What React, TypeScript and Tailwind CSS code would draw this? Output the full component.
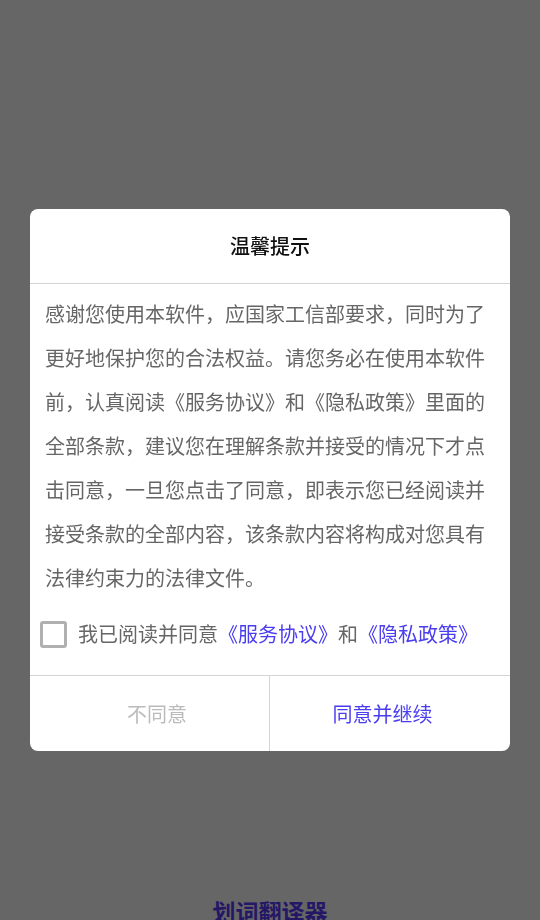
import { useState } from 'react'

const font = { fontFamily: '"Noto Sans CJK SC", "Noto Sans", sans-serif' }

export default function App() {
  const [checked, setChecked] = useState(false)

  return (
    <div className="relative h-[920px] w-full overflow-hidden bg-white" style={font}>
      {/* tela de fundo */}
      <div className="pt-[896px] text-center text-[23px] font-bold leading-[30px] text-[#5a3cff]">划词翻译器</div>

      {/* overlay + diálogo */}
      <div className="fixed inset-0 flex justify-center bg-black/60 pt-[209px]">
        <div className="h-fit w-[480px] overflow-hidden rounded-[8px] bg-white">
          <div className="flex h-[75px] items-center justify-center border-b border-[#d4d4d4] text-[20px] font-medium text-[#111]">
            温馨提示
          </div>

          <p className="px-[15px] pt-[8px] text-[20px] leading-[44px] text-[#666]">
            感谢您使用本软件，应国家工信部要求，同时为了更好地保护您的合法权益。请您务必在使用本软件前，认真阅读《服务协议》和《隐私政策》里面的全部条款，建议您在理解条款并接受的情况下才点击同意，一旦您点击了同意，即表示您已经阅读并接受条款的全部内容，该条款内容将构成对您具有法律约束力的法律文件。
          </p>

          <div className="mb-[7px] flex h-[68px] items-center pl-[10px] text-[20px] text-[#666]">
            <button
              onClick={() => setChecked(!checked)}
              className={`mr-[11px] h-[27px] w-[27px] rounded-[3px] border-[3px] ${checked ? 'border-[#4a3df0] bg-[#4a3df0]' : 'border-[#b0b0b0] bg-white'}`}
            />
            <span>我已阅读并同意</span>
            <span className="text-[#4a3df0]">《服务协议》</span>
            <span>和</span>
            <span className="text-[#4a3df0]">《隐私政策》</span>
          </div>

          <div className="grid h-[76px] grid-cols-2 border-t border-[#d4d4d4] text-[20px]">
            <button className="border-r border-[#d4d4d4] pl-[15px] text-[#bbb]">不同意</button>
            <button className="pr-[15px] text-[#4a3df0]">同意并继续</button>
          </div>
        </div>
      </div>
    </div>
  )
}
